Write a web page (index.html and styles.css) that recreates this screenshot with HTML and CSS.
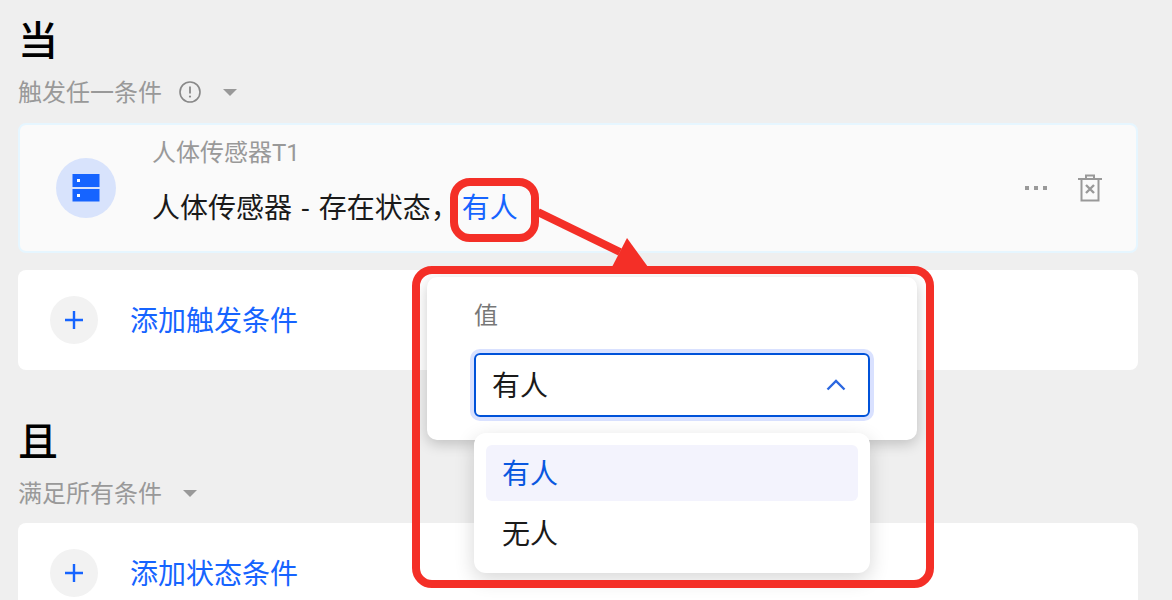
FILE: index.html
```html
<!DOCTYPE html>
<html>
<head>
    <title>自动化条件</title>
    <link rel="stylesheet" href="styles.css">
</head>
<body>
    <div class="page">
        <h2 class="heading">当</h2>
        <div class="sub">
            <span class="sub-text">触发任一条件</span>
            <svg class="info" width="24" height="24" viewBox="0 0 24 24">
                <circle cx="12" cy="12" r="10" fill="none" stroke="#888" stroke-width="1.6"/>
                <path d="M12 6.500v7" stroke="#888" stroke-width="1.8" fill="none"/>
                <circle cx="12" cy="16.600" r="1.100" fill="#888"/>
            </svg>
            <span class="caret caret-info"></span>
        </div>

        <div class="card card-device">
            <div class="device-icon">
                <svg width="28" height="28" viewBox="0 0 28 28">
                    <rect x="0.500" y="0" width="27" height="13" fill="#1664ff"/>
                    <rect x="0.500" y="15" width="27" height="12.500" fill="#1664ff"/>
                    <rect x="5" y="5" width="3" height="3" fill="#fff"/>
                    <rect x="5" y="20" width="3" height="3" fill="#fff"/>
                </svg>
            </div>
            <div class="device-text">
                <div class="device-name">人体传感器T1</div>
                <div class="device-state">人体传感器 - 存在状态，<span class="link state-value">有人</span></div>
            </div>
            <div class="device-actions">
                <svg width="24" height="8" viewBox="0 0 24 8">
                    <rect x="1" y="2" width="4" height="4" fill="#999"/>
                    <rect x="10" y="2" width="4" height="4" fill="#999"/>
                    <rect x="19" y="2" width="4" height="4" fill="#999"/>
                </svg>
                <svg width="24" height="28" viewBox="0 0 24 28" fill="none" stroke="#999" stroke-width="2">
                    <path d="M0 5h24"/>
                    <path d="M8 5V1.500h8V5"/>
                    <path d="M3.500 5v21.500h17V5"/>
                    <path d="M8 11l8 8M16 11l-8 8" stroke-width="2.400"/>
                </svg>
            </div>
        </div>

        <div class="card card-add">
            <span class="plus"><svg width="18" height="18" viewBox="0 0 18 18"><path d="M9 0v18M0 9h18" stroke="#1664ff" stroke-width="2.400"/></svg></span>
            <span class="link add-text">添加触发条件</span>
        </div>

        <h2 class="heading heading-second">且</h2>
        <div class="sub">
            <span class="sub-text">满足所有条件</span>
            <span class="caret caret-plain"></span>
        </div>

        <div class="card card-add">
            <span class="plus"><svg width="18" height="18" viewBox="0 0 18 18"><path d="M9 0v18M0 9h18" stroke="#1664ff" stroke-width="2.400"/></svg></span>
            <span class="link add-text">添加状态条件</span>
        </div>

        <div class="popup">
            <div class="popup-label">值</div>
            <div class="select">
                <span class="select-text">有人</span>
                <svg width="20" height="12" viewBox="0 0 20 12"><path d="M1.500 10.500L10 2l8.500 8.500" fill="none" stroke="#2b67e0" stroke-width="2.400"/></svg>
            </div>
        </div>
        <div class="options">
            <div class="option option-active">有人</div>
            <div class="option">无人</div>
        </div>

        <div class="mark mark-value"></div>
        <div class="mark mark-popup"></div>
        <svg class="arrow" width="120" height="62" viewBox="0 0 120 62">
            <path d="M0 7L82 47" stroke="#f42f27" stroke-width="8" fill="none"/>
            <path d="M89 33L110 62H74z" fill="#f42f27"/>
        </svg>
    </div>
</body>
</html>
```

FILE: styles.css
```css
* {
    box-sizing: border-box;
}
body {
    margin: 0;
    background-color: #efefef;
    font-family: Roboto, "Noto Sans CJK SC", sans-serif;
    overflow: hidden;
}
.page {
    position: relative;
    width: 1172px;
    height: 600px;
    padding: 20px 34px 0 18px;
    overflow: hidden;
}
.heading {
    margin: 0 0 11px 0;
    font-size: 40px;
    line-height: 44px;
    font-weight: 500;
    color: #000;
}
.heading-second {
    margin-top: 51px;
}
.sub {
    display: flex;
    align-items: center;
    height: 34px;
    font-size: 24px;
    color: #999;
}
.sub-text {
    padding-bottom: 3px;
}
.info {
    margin-left: 16px;
}
.caret {
    width: 0;
    height: 0;
    border-left: 7px solid transparent;
    border-right: 7px solid transparent;
    border-top: 7px solid #999;
}
.caret-info {
    margin-left: 21px;
}
.caret-plain {
    margin-left: 21px;
}
.card {
    display: flex;
    align-items: center;
    margin-top: 14px;
    background-color: #fff;
    border-radius: 8px;
}
.card-device {
    height: 130px;
    padding: 0 34px 0 36px;
    background-color: #fafafa;
    border: 2px solid #e6f6ff;
}
.card-add {
    height: 100px;
    margin-top: 17px;
    padding-left: 32px;
}
.sub + .card-add {
    margin-top: 13px;
}
.device-icon {
    display: flex;
    align-items: center;
    justify-content: center;
    width: 60px;
    height: 60px;
    border-radius: 50%;
    background-color: #d8e3fc;
}
.device-text {
    margin-left: 36px;
    padding-bottom: 9px;
}
.device-name {
    font-size: 24px;
    line-height: 30px;
    color: #999;
}
.device-state {
    margin-top: 21px;
    font-size: 28px;
    line-height: 40px;
    word-spacing: 2.5px;
    color: #1a1a1a;
}
.state-value {
    margin-left: 3px;
}
.link {
    font-size: 28px;
    color: #1664ff;
}
.add-text {
    padding-bottom: 2px;
}
.device-actions {
    display: flex;
    align-items: center;
    gap: 30px;
    margin-left: auto;
}
.plus {
    display: flex;
    align-items: center;
    justify-content: center;
    width: 48px;
    height: 48px;
    margin-right: 32px;
    border-radius: 50%;
    background-color: #f2f2f2;
}
.popup {
    position: absolute;
    left: 427px;
    top: 277px;
    width: 490px;
    height: 163px;
    padding: 22px 47px 0 47px;
    background-color: #fff;
    border-radius: 10px;
    box-shadow: 0 4px 14px rgba(0, 0, 0, 0.2);
}
.popup-label {
    font-size: 24px;
    line-height: 34px;
    color: #777;
}
.select {
    display: flex;
    align-items: center;
    justify-content: space-between;
    width: 396px;
    height: 64px;
    margin-top: 20px;
    padding: 0 22px 0 16px;
    font-size: 28px;
    color: #1a1a1a;
    border: 2px solid #0052d9;
    border-radius: 6px;
    box-shadow: 0 0 0 4px #d9e1ff;
}
.select-text {
    padding-bottom: 2px;
}
.options {
    position: absolute;
    left: 474px;
    top: 433px;
    width: 396px;
    height: 140px;
    padding: 12px;
    background-color: #fff;
    border-radius: 12px;
    box-shadow: 0 6px 20px rgba(0, 0, 0, 0.16);
}
.option {
    height: 56px;
    padding-left: 16px;
    font-size: 28px;
    line-height: 60px;
    color: #1a1a1a;
    border-radius: 6px;
}
.option + .option {
    margin-top: 4px;
}
.option-active {
    color: #0a58e0;
    background-color: #f3f3fd;
}
.mark {
    position: absolute;
    border: 8px solid #f42f27;
}
.mark-value {
    left: 450px;
    top: 178px;
    width: 89px;
    height: 64px;
    border-radius: 20px;
}
.mark-popup {
    left: 412px;
    top: 266px;
    width: 522px;
    height: 322px;
    border-radius: 20px;
}
.arrow {
    position: absolute;
    left: 538px;
    top: 205px;
    width: 120px;
    height: 62px;
}
```
